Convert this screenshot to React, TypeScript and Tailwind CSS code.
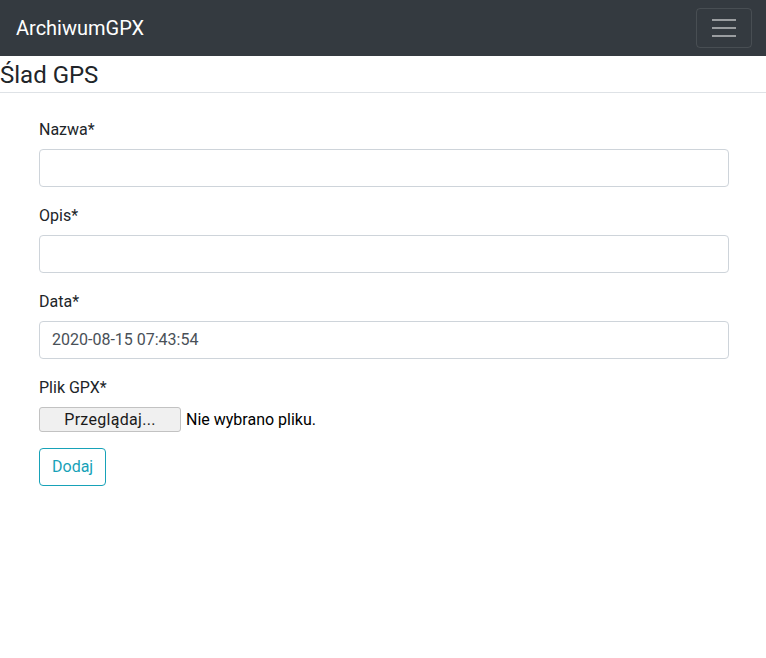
export default function App() {
  return (
    <div className="min-h-[658px] bg-white text-[#212529] font-['Roboto','Liberation_Sans',sans-serif] text-[16px] leading-[24px]">
      <nav className="h-[56px] bg-[#343a40] flex items-center justify-between pl-[16px] pr-[14px]">
        <span className="text-white text-[20px] leading-[30px]">ArchiwumGPX</span>
        <button className="w-[56px] h-[40px] border border-[rgba(255,255,255,0.1)] rounded-[4px] flex flex-col items-center justify-center gap-[6px]">
          <span className="block w-[24px] h-[2px] bg-[rgba(255,255,255,0.5)]" />
          <span className="block w-[24px] h-[2px] bg-[rgba(255,255,255,0.5)]" />
          <span className="block w-[24px] h-[2px] bg-[rgba(255,255,255,0.5)]" />
        </button>
      </nav>
      <h4 className="text-[24px] leading-[28.8px] font-normal pt-[5px] pb-[2px] border-b border-[#dee2e6]">Ślad GPS</h4>
      <form className="pl-[39px] pr-[37px] pt-[24px]">
        <div className="mb-[16px]">
          <label className="block pt-[1px] mb-[7px]">Nazwa*</label>
          <input type="text" className="block w-full h-[38px] border border-[#ced4da] rounded-[4px] px-[12px] text-[#495057]" />
        </div>
        <div className="mb-[16px]">
          <label className="block pt-[1px] mb-[7px]">Opis*</label>
          <input type="text" className="block w-full h-[38px] border border-[#ced4da] rounded-[4px] px-[12px] text-[#495057]" />
        </div>
        <div className="mb-[16px]">
          <label className="block pt-[1px] mb-[7px]">Data*</label>
          <input type="text" defaultValue="2020-08-15 07:43:54" className="block w-full h-[38px] border border-[#ced4da] rounded-[4px] px-[12px] text-[#495057]" />
        </div>
        <div className="mb-[16px]">
          <label className="block pt-[1px] mb-[7px]">Plik GPX*</label>
          <div className="flex items-center h-[25px]">
            <span className="inline-flex items-center justify-center w-[142px] h-[25px] bg-[#f0f0f0] border border-[#c2c2c2] rounded-[3px] text-[16px] text-[#1a1a1a] tracking-[0.3px] pt-[1px]">Przeglądaj...</span>
            <span className="ml-[5px] pt-[1px] text-black">Nie wybrano pliku.</span>
          </div>
        </div>
        <button type="button" className="h-[38px] px-[12px] pt-[1px] border border-[#17a2b8] text-[#17a2b8] rounded-[4px] w-[67px]">Dodaj</button>
      </form>
    </div>
  );
}
